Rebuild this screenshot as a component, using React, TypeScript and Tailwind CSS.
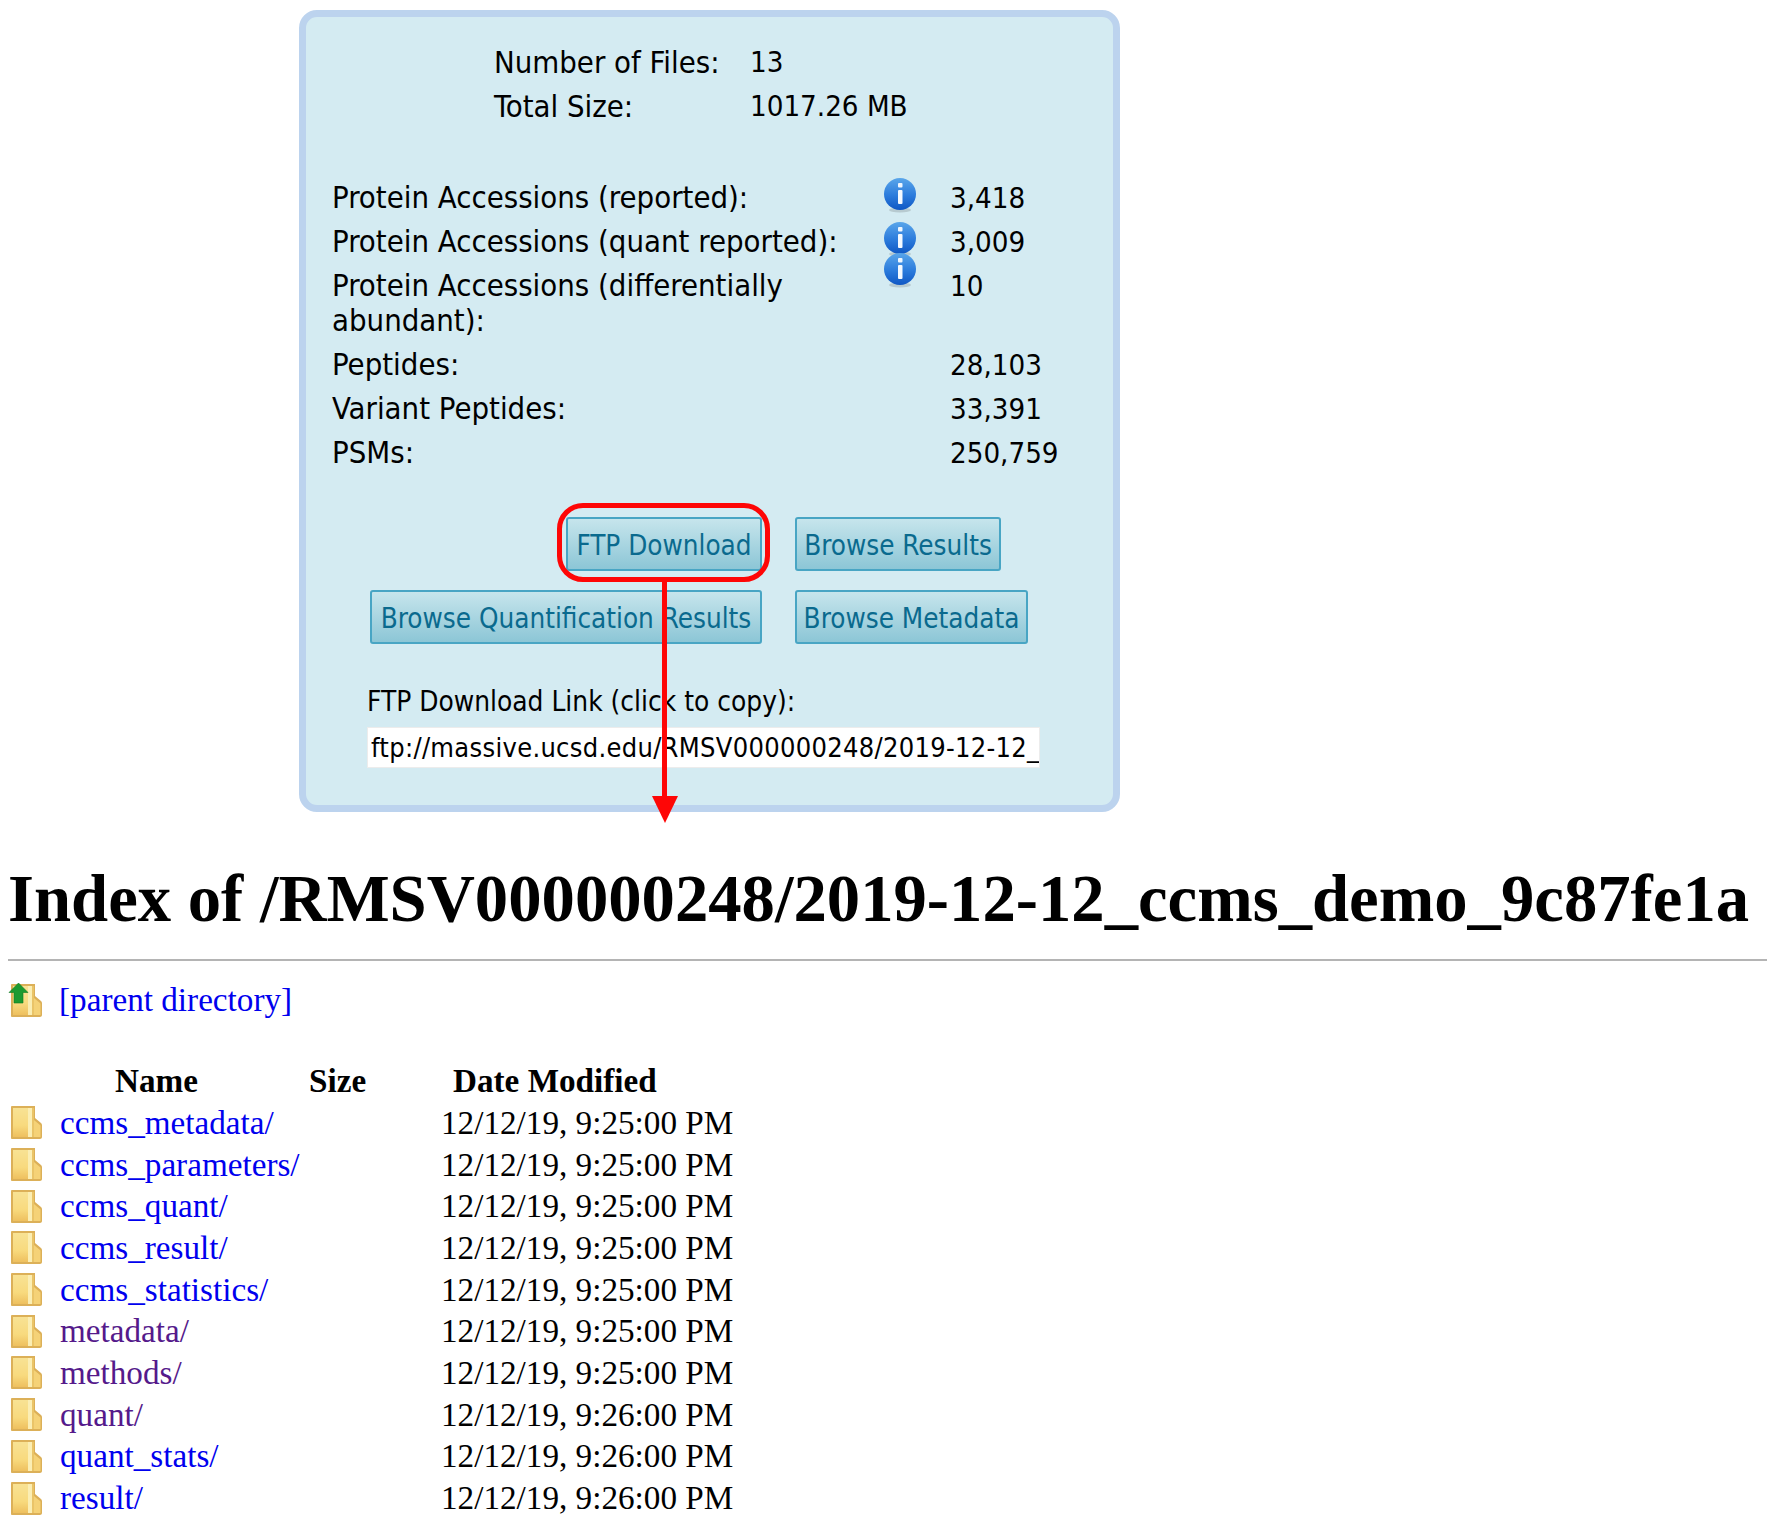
import React from 'react';

const panelFont = { fontFamily: '"DejaVu Sans Condensed", "DejaVu Sans", sans-serif', fontStretch: 'condensed' };

const InfoIcon = () => (
  <svg width="34" height="38" viewBox="0 0 34 38" className="blur-[0.4px]">
    <defs>
      <linearGradient id="infoFill" x1="0" y1="0" x2="0" y2="1">
        <stop offset="0" stopColor="#5aa6ea" />
        <stop offset="0.55" stopColor="#2b7bdc" />
        <stop offset="1" stopColor="#0f57c4" />
      </linearGradient>
    </defs>
    <ellipse cx="17" cy="33" rx="11" ry="2.500" fill="#9aa9ad" opacity="0.5" />
    <circle cx="17" cy="17" r="16" fill="url(#infoFill)" />
    <rect x="15" y="6" width="4.5" height="4.5" rx="1" fill="#eef6ff" />
    <rect x="15" y="13" width="4.5" height="14" rx="1" fill="#f4f9ff" />
  </svg>
);

const Folder = ({ up = false }: { up?: boolean }) => (
  <svg width="32" height="33" viewBox="0 0 32 33" className="shrink-0 overflow-visible blur-[0.7px]">
    <defs>
      <linearGradient id="folderFill" x1="0" y1="0" x2="0" y2="1">
        <stop offset="0" stopColor="#f8e294" />
        <stop offset="0.6" stopColor="#f8da7e" />
        <stop offset="1" stopColor="#eec05f" />
      </linearGradient>
    </defs>
    <path d="M1 0h23v12l6 5c1 1 1 2 1 3v11c0 1-1 2-2 2H1c-.500 0-1-.500-1-1V1c0-.500.500-1 1-1z" fill="#dcb058" />
    <rect x="2" y="2" width="15" height="29" fill="url(#folderFill)" />
    <rect x="17" y="2" width="4" height="29" fill="#fbeeb4" />
    <rect x="21" y="2" width="2" height="29" fill="#eac468" />
    <path d="M23 14l6.500 5.500V31H23z" fill="#f5d277" />
    {up && <path d="M7.500 -1L17 8.500H12V19H3V8.500H-2z" fill="#1c9a30" stroke="#0f7a20" strokeWidth="0.6" />}
  </svg>
);

const stats = [
  { label: 'Protein Accessions (reported):', value: '3,418', info: true },
  { label: 'Protein Accessions (quant reported):', value: '3,009', info: true },
  { label: 'Protein Accessions (differentially abundant):', value: '10', info: true, pull: true },
  { label: 'Peptides:', value: '28,103' },
  { label: 'Variant Peptides:', value: '33,391' },
  { label: 'PSMs:', value: '250,759' },
];

const files = [
  { name: 'ccms_metadata/', time: '9:25:00 PM' },
  { name: 'ccms_parameters/', time: '9:25:00 PM' },
  { name: 'ccms_quant/', time: '9:25:00 PM' },
  { name: 'ccms_result/', time: '9:25:00 PM' },
  { name: 'ccms_statistics/', time: '9:25:00 PM' },
  { name: 'metadata/', time: '9:25:00 PM', visited: true },
  { name: 'methods/', time: '9:25:00 PM', visited: true },
  { name: 'quant/', time: '9:26:00 PM', visited: true },
  { name: 'quant_stats/', time: '9:26:00 PM' },
  { name: 'result/', time: '9:26:00 PM' },
];

const PanelButton = ({ children, width }: { children: React.ReactNode; width: string }) => (
  <button
    className={`${width} h-[54px] shrink-0 rounded-[3px] border-2 border-[#48a5c4] bg-gradient-to-b from-[#c6e5ec] to-[#8cc6d6] pt-[3px] text-center text-[27.6px] leading-none text-[#0a6a8e]`}
  >
    {children}
  </button>
);

export default function App() {
  return (
    <div className="h-[1532px] overflow-hidden bg-white text-black">
      <div
        style={panelFont}
        className="relative ml-[299px] mt-[10px] h-[802px] w-[821px] rounded-[18px] border-[7px] border-[#bcd3ee] bg-[#d4ebf2] text-[30.8px]"
      >
        <div className="ml-[188px] pt-[24px]">
          <div className="flex h-[44px] items-center"><span className="w-[256px] pb-[2px]">Number of Files:</span><span className="text-[29.2px]">13</span></div>
          <div className="flex h-[44px] items-center"><span className="w-[256px] pb-[2px]">Total Size:</span><span className="text-[29.2px]">1017.26 MB</span></div>
        </div>

        <div className="ml-[26px] mt-[48px]">
          {stats.map((s) => (
            <div key={s.label} className="flex min-h-[44px] items-start">
              <span className="w-[551px] pb-[6px] pr-[20px] pt-[3px] leading-[35px]">{s.label}</span>
              <span className={`w-[67px] ${s.pull ? '-mt-[13px]' : 'mt-0'}`}>{s.info && <InfoIcon />}</span>
              <span className="pt-[4px] text-[29.2px] leading-[35px]">{s.value}</span>
            </div>
          ))}
        </div>

        <div className="ml-[64px] mt-[41px] flex gap-[33px]">
          <div className="flex w-[392px] justify-end"><PanelButton width="w-[196px]">FTP Download</PanelButton></div>
          <PanelButton width="w-[206px]">Browse Results</PanelButton>
        </div>
        <div className="ml-[64px] mt-[19px] flex gap-[33px]">
          <PanelButton width="w-[392px]">Browse Quantification Results</PanelButton>
          <PanelButton width="w-[233px]">Browse Metadata</PanelButton>
        </div>

        <div className="ml-[61px] mt-[40px] text-[27.8px] leading-[36px]">FTP Download Link (click to copy):</div>
        <input
          readOnly
          value="ftp://massive.ucsd.edu/RMSV000000248/2019-12-12_ccms_demo_9c87fe1a"
          className="ml-[61px] mt-[7px] h-[41px] w-[673px] border border-[#ececec] bg-white pl-[3px] text-[27px] tracking-[0.3px] outline-none"
        />

        {/* red annotation on top of the screenshot */}
        <div className="absolute left-[251px] top-[486px] h-[79px] w-[213px] rounded-[26px] border-[5px] border-[#fe0606]" />
        <div className="absolute left-[356px] top-[563px] h-[220px] w-[5px] bg-[#fe0606]" />
        <svg className="absolute left-[346px] top-[779px]" width="26" height="27" viewBox="0 0 26 27">
          <path d="M0 0h26L13 27z" fill="#fe0606" />
        </svg>
      </div>

      <div style={{ fontFamily: '"Liberation Serif", serif' }} className="pl-[8px]">
        <h1 className="mt-[50px] whitespace-nowrap text-[66.7px] font-bold leading-[74px]">
          Index of /RMSV000000248/2019-12-12_ccms_demo_9c87fe1a
        </h1>
        <hr className="mt-[23px] border-t-2 border-[#b4b4b4]" />
        <div className="mt-[20px] flex h-[38px] items-center gap-[16px] pl-[3px] text-[33.2px] text-[#0000ee]">
          <Folder up />
          <a>[parent directory]</a>
        </div>
        <div className="mt-[42px] flex h-[40px] items-center text-[33.2px] font-bold">
          <span className="w-[301px] pl-[107px]">Name</span>
          <span className="w-[144px]">Size</span>
          <span>Date Modified</span>
        </div>
        <div className="mt-[1px] text-[33.2px]">
          {files.map((f) => (
            <div key={f.name} className="flex h-[41.7px] items-center pl-[3px]">
              <Folder />
              <a className={`ml-[17px] w-[381px] ${f.visited ? 'text-[#551a8b]' : 'text-[#0000ee]'}`}>{f.name}</a>
              <span>12/12/19, {f.time}</span>
            </div>
          ))}
        </div>
      </div>
    </div>
  );
}
